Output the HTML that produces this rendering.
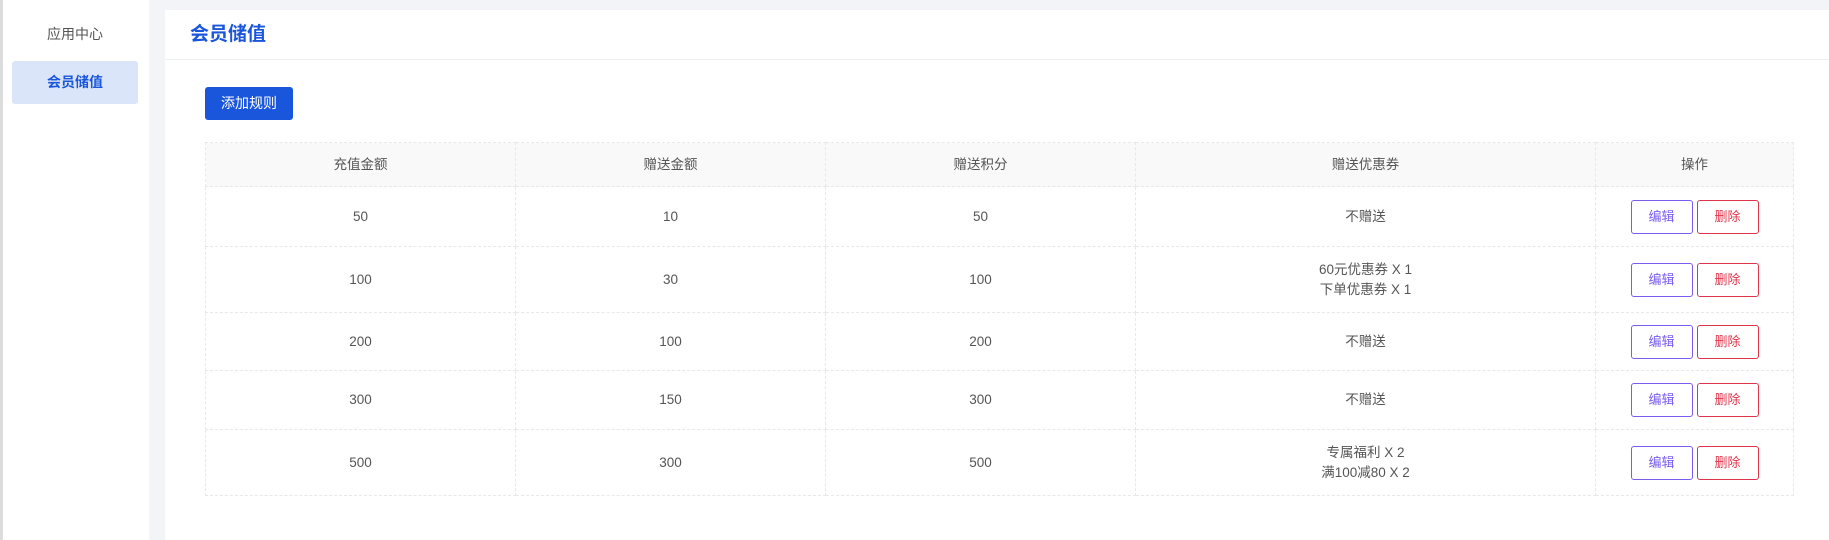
<!DOCTYPE html>
<html><head><meta charset="utf-8"><style>
*{margin:0;padding:0;box-sizing:border-box}
body{width:1829px;height:540px;background:#f3f4f8;font-family:"Liberation Sans","Noto Sans CJK SC",sans-serif;position:relative;overflow:hidden;color:#555}
.side{position:absolute;left:0;top:0;width:149px;height:540px;background:#fff;border-left:3px solid #dcdcdc}
.mi{position:absolute;left:9px;width:126px;height:43px;line-height:43px;text-align:center;font-size:14px;color:#555}
.mi.a{background:#dbe5f9;color:#1a56db;font-weight:bold;border-radius:3px}
.card{position:absolute;left:165px;top:10px;right:0;bottom:0;background:#fff}
.hd{height:50px;border-bottom:1px solid #eef0f3;padding-left:25px;line-height:50px;font-size:19px;font-weight:bold;color:#1a56db}
.btn{position:absolute;left:40px;top:77px;width:88px;height:33px;background:#1a56db;color:#fff;font-size:14px;line-height:33px;text-align:center;border-radius:3px}
table{position:absolute;left:40px;top:132px;width:1589px;table-layout:fixed;border-collapse:collapse;font-size:13.5px;color:#555}
td,th{border:1px dashed #e8e8ea;text-align:center;font-weight:normal;line-height:20px}
th{background:#f9f9f9;height:44px}
.e,.d{display:inline-block;width:62px;height:34px;line-height:32px;border:1px solid #7a5cf0;color:#7a5cf0;border-radius:3px;margin:0 2px;font-size:13px}
.d{border-color:#e0344b;color:#e0344b}
</style></head><body>
<div class="side"><div class="mi" style="top:13px">应用中心</div><div class="mi a" style="top:61px">会员储值</div></div>
<div class="card"><div class="hd">会员储值</div><div class="btn">添加规则</div>
<table>
<tr><th style="width:310px">充值金额</th><th style="width:310px">赠送金额</th><th style="width:310px">赠送积分</th><th style="width:460px">赠送优惠券</th><th>操作</th></tr>
<tr style="height:60px"><td>50</td><td>10</td><td>50</td><td>不赠送</td><td><span class="e">编辑</span><span class="d">删除</span></td></tr>
<tr style="height:66px"><td>100</td><td>30</td><td>100</td><td>60元优惠券 X 1<br>下单优惠券 X 1</td><td><span class="e">编辑</span><span class="d">删除</span></td></tr>
<tr style="height:58px"><td>200</td><td>100</td><td>200</td><td>不赠送</td><td><span class="e">编辑</span><span class="d">删除</span></td></tr>
<tr style="height:59px"><td>300</td><td>150</td><td>300</td><td>不赠送</td><td><span class="e">编辑</span><span class="d">删除</span></td></tr>
<tr style="height:66px"><td>500</td><td>300</td><td>500</td><td>专属福利 X 2<br>满100减80 X 2</td><td><span class="e">编辑</span><span class="d">删除</span></td></tr>
</table></div>
</body></html>
